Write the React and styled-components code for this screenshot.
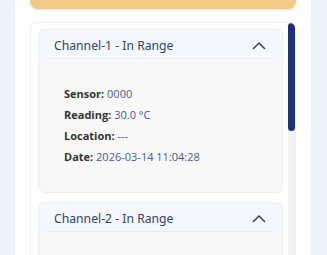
import React from 'react';
import styled, {createGlobalStyle} from 'styled-components';

const GlobalStyle = createGlobalStyle`
  html, body {
    margin: 0;
    padding: 0;
    background: #eef2fb;
    overflow: hidden;
  }
`;

const Page = styled.div`
  width: 327px;
  height: 255px;
  overflow: hidden;
  background: #eef2fb;
  display: flex;
  padding-left: 15px;
  box-sizing: border-box;
`;

const Panel = styled.div`
  width: 296px;
  background: #ffffff;
  padding: 0 15px;
  box-sizing: border-box;
  display: flex;
  flex-direction: column;
`;

const Banner = styled.div`
  height: 9px;
  flex: none;
  background: #f3c986;
  border-radius: 0 0 8px 8px;
  box-shadow: 0 1px 2px rgba(180, 140, 60, 0.25);
`;

const ScrollBox = styled.div`
  position: relative;
  margin-top: 13px;
  height: 260px;
  flex: none;
  border: 1px solid #eef0f4;
  border-radius: 6px;
  padding: 6px 12px 6px 7px;
  overflow: hidden;
  box-sizing: border-box;
  display: flex;
  flex-direction: column;
  gap: 9px;
`;

/* scrollbar drawn over the list's right edge */
const Track = styled.div`
  position: absolute;
  top: 0;
  right: 0;
  bottom: 0;
  width: 7px;
  background: #f3f3f3;
`;

const Thumb = styled.div`
  height: 108px;
  border-radius: 4px;
  background: #1f2f7c;
`;

const Item = styled.div`
  flex: none;
  border: 1px solid #eceef2;
  border-radius: 6px;
  background: #f8f8f8;
  overflow: hidden;
`;

const Header = styled.div`
  background: #f4f7fc;
  padding: 0 9px;
`;

const HeaderInner = styled.div`
  height: 25px;
  padding: 3px 7px 0 6px;
  display: flex;
  align-items: center;
  justify-content: space-between;
  border-bottom: 1px solid #e6eaf1;
  font-family: "Noto Sans", "Open Sans", sans-serif;
  font-size: 12.2px;
  color: #34426c;
`;

const Body = styled.div`
  padding: 24px 25px 25px;
  font-family: "Open Sans", "Noto Sans", sans-serif;
  font-size: 11px;
  line-height: 21px;
  color: #4a5a8c;
`;

const Label = styled.span`
  font-weight: 700;
  color: #333333;
`;

const Chevron = () => (
  <svg width="14" height="9" viewBox="0 0 14 9" fill="none">
    <path d="M1.5 7.5 L7 2 L12.5 7.5" stroke="#3a4256" strokeWidth="1.5" strokeLinecap="round" strokeLinejoin="round"/>
  </svg>
);

const channels = [
  {name: 'Channel-1', sensor: '0000', reading: '30.0 °C', location: '---', date: '2026-03-14 11:04:28'},
  {name: 'Channel-2', sensor: '0001', reading: '29.5 °C', location: '---', date: '2026-03-14 11:04:28'},
];

export default function App() {
  return <>
    <GlobalStyle/>
    <Page>
      <Panel>
        <Banner/>
        <ScrollBox>
          {channels.map((c, i) => <Item key={c.name}>
            <Header>
              <HeaderInner>
                <span>{c.name} - In Range</span>
                <Chevron/>
              </HeaderInner>
            </Header>
            {i === 0 ? <Body>
              <div><Label>Sensor:</Label> {c.sensor}</div>
              <div><Label>Reading:</Label> {c.reading}</div>
              <div><Label>Location:</Label> {c.location}</div>
              <div><Label>Date:</Label> {c.date}</div>
            </Body> : <Body/>}
          </Item>)}
          <Track><Thumb/></Track>
        </ScrollBox>
      </Panel>
    </Page>
  </>;
}
